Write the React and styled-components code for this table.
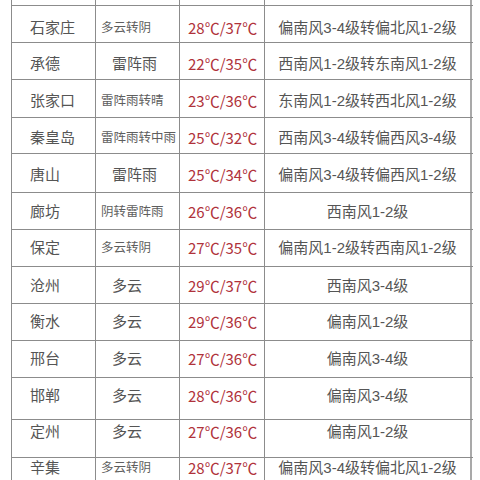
import React from "react";
import styled, { createGlobalStyle } from "styled-components";

const Global = createGlobalStyle`
  html, body { margin: 0; padding: 0; background: #fff; }
  body { font-family: "Liberation Sans", "Noto Sans CJK SC", sans-serif; }
`;

const Page = styled.div`
  width: 480px;
  height: 480px;
  overflow: hidden;
  background: #fff;
  padding-left: 11px;
  box-sizing: border-box;
`;

const Table = styled.div`
  display: flex;
  flex-direction: column;
  width: 461px;
  border-left: 1px solid #8c8c8c;
`;

const Row = styled.div`
  display: grid;
  grid-template-columns: 84px 84px 85px 207px;
  box-sizing: border-box;
  height: ${(p) => p.$h}px;
  border-top: ${(p) => (p.$first ? "none" : "1px solid #8c8c8c")};
`;

const Cell = styled.div`
  box-sizing: border-box;
  border-right: 1px solid #8c8c8c;
  padding-top: ${(p) => p.$pt}px;
  line-height: 20px;
  white-space: nowrap;
  color: #555;
  overflow: hidden;
`;

const City = styled(Cell)`
  font-size: 15px;
  padding-left: 18px;
`;

const Weather = styled(Cell)`
  font-size: ${(p) => (p.$small ? "12.5px" : "15px")};
  padding-left: ${(p) => (p.$small ? "5px" : "16px")};
  color: ${(p) => (p.$small ? "#5e5e5e" : "#555")};
`;

const Temp = styled(Cell)`
  font-family: "Noto Sans CJK SC", sans-serif;
  font-size: 15px;
  padding-left: 8px;
  color: #b0323b;
`;

const Wind = styled(Cell)`
  font-size: 15px;
  text-align: center;
  border-right: 2px solid #a9a9a9;
`;

const rows = [
  ["石家庄", "多云转阴", "28℃/37℃", "偏南风3-4级转偏北风1-2级", 37, 22],
  ["承德", "雷阵雨", "22℃/35℃", "西南风1-2级转东南风1-2级", 37, 21],
  ["张家口", "雷阵雨转晴", "23℃/36℃", "东南风1-2级转西北风1-2级", 38, 21],
  ["秦皇岛", "雷阵雨转中雨", "25℃/32℃", "西南风3-4级转偏西风3-4级", 36, 20],
  ["唐山", "雷阵雨", "25℃/34℃", "偏南风3-4级转偏西风1-2级", 39, 21],
  ["廊坊", "阴转雷阵雨", "26℃/36℃", "西南风1-2级", 37, 19],
  ["保定", "多云转阴", "27℃/35℃", "偏南风1-2级转西南风1-2级", 37, 18],
  ["沧州", "多云", "29℃/37℃", "西南风3-4级", 37, 19],
  ["衡水", "多云", "29℃/36℃", "偏南风1-2级", 37, 18],
  ["邢台", "多云", "27℃/36℃", "偏南风3-4级", 37, 18],
  ["邯郸", "多云", "28℃/36℃", "偏南风3-4级", 42, 18],
  ["定州", "多云", "27℃/36℃", "偏南风1-2级", 38, 12],
  ["辛集", "多云转阴", "28℃/37℃", "偏南风3-4级转偏北风1-2级", 40, 10],
];

export default function App() {
  return (
    <Page>
      <Global />
      <Table>
        <Row $h={5} $first>
          <City $pt={0} />
          <Weather $pt={0} />
          <Temp $pt={0} />
          <Wind $pt={0} />
        </Row>
        {rows.map(([c, w, t, wd, h, off]) => {
          const pt = off - 10;
          return (
            <Row key={c} $h={h}>
              <City $pt={pt}>{c}</City>
              <Weather $pt={pt} $small={w.length > 3}>{w}</Weather>
              <Temp $pt={pt}>{t}</Temp>
              <Wind $pt={pt}>{wd}</Wind>
            </Row>
          );
        })}
      </Table>
    </Page>
  );
}
